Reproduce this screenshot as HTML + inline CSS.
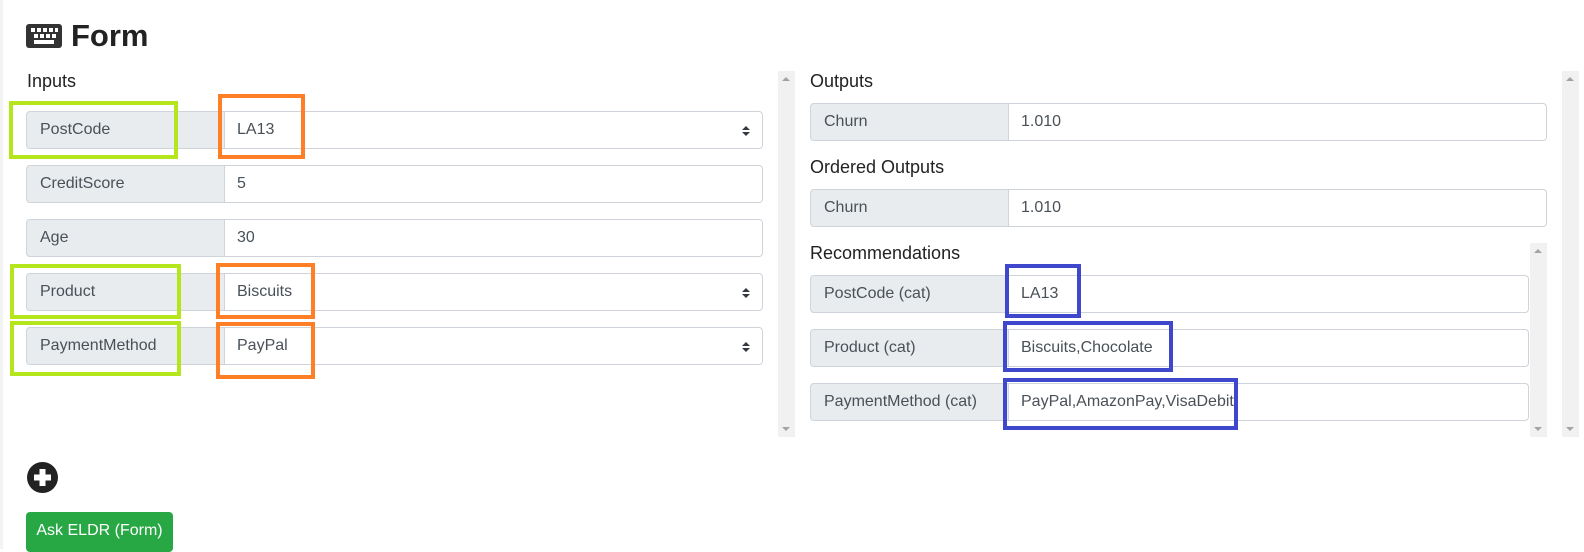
<!DOCTYPE html>
<html><head><style>
*{box-sizing:border-box;margin:0;padding:0}
body{width:1584px;height:549px;background:#fff;position:relative;overflow:hidden;font-family:"Liberation Sans",sans-serif;color:#495057}
.a{position:absolute}
.edge{left:0;top:0;width:3px;height:549px;background:#f3f3f3}
h1{position:absolute;left:71px;top:18px;font-size:31px;font-weight:bold;color:#222;line-height:36px}
.h{position:absolute;font-size:18px;color:#222;line-height:20px}
.row{position:absolute;height:38px;display:flex;font-size:16px}
.lab{background:#e9ecef;border:1px solid #ced4da;border-radius:4px 0 0 4px;padding-left:13px;display:flex;align-items:center;flex:none}
.val{flex:1;border:1px solid #ced4da;border-left:none;border-radius:0 4px 4px 0;padding-left:12px;display:flex;align-items:center;position:relative;background:#fff}
.arr{position:absolute;right:12px;top:13px;width:8px;height:12px}
.sb{position:absolute;background:#f1f1f1;width:17px}
.up,.dn{position:absolute;left:4px;width:0;height:0;border-left:4px solid transparent;border-right:4px solid transparent}
.up{top:6px;border-bottom:4px solid #a3a3a3}
.dn{bottom:6px;border-top:4px solid #a3a3a3}
.box{position:absolute;border:4px solid}
.g{border-color:#b5e61d}.o{border-color:#ff7f27}.b{border-color:#3f48cc}
.btn{position:absolute;left:26px;top:512px;width:147px;height:40px;background:#28a745;border-radius:4px;color:#fff;font-size:16px;display:flex;align-items:center;justify-content:center;padding-bottom:2px}
</style></head><body>
<div class="a edge"></div>
<svg class="a" style="left:26px;top:24px" width="36" height="24" viewBox="0 0 36 24">
<rect x="0" y="0" width="36" height="24" rx="3" fill="#333"/>
<g fill="#fff"><rect x="5" y="4" width="4" height="4"/><rect x="11" y="4" width="4" height="4"/><rect x="17" y="4" width="4" height="4"/><rect x="23" y="4" width="4" height="4"/><rect x="29" y="4" width="3" height="4"/>
<rect x="8" y="10" width="4" height="4"/><rect x="14" y="10" width="4" height="4"/><rect x="20" y="10" width="4" height="4"/><rect x="26" y="10" width="4" height="4"/>
<rect x="8" y="16" width="20" height="4"/></g></svg>
<h1>Form</h1>

<div class="h" style="left:27px;top:71px">Inputs</div>
<div class="row" style="left:26px;top:111px;width:737px"><div class="lab" style="width:199px">PostCode</div><div class="val">LA13<svg class="arr" viewBox="0 0 8 12"><path d="M0 5L4 1L8 5ZM0 7L4 11L8 7Z" fill="#343a40"/></svg></div></div>
<div class="row" style="left:26px;top:165px;width:737px"><div class="lab" style="width:199px">CreditScore</div><div class="val">5</div></div>
<div class="row" style="left:26px;top:219px;width:737px"><div class="lab" style="width:199px">Age</div><div class="val">30</div></div>
<div class="row" style="left:26px;top:273px;width:737px"><div class="lab" style="width:199px">Product</div><div class="val">Biscuits<svg class="arr" viewBox="0 0 8 12"><path d="M0 5L4 1L8 5ZM0 7L4 11L8 7Z" fill="#343a40"/></svg></div></div>
<div class="row" style="left:26px;top:327px;width:737px"><div class="lab" style="width:199px">PaymentMethod</div><div class="val">PayPal<svg class="arr" viewBox="0 0 8 12"><path d="M0 5L4 1L8 5ZM0 7L4 11L8 7Z" fill="#343a40"/></svg></div></div>
<div class="sb" style="left:778px;top:71px;height:366px"><div class="up"></div><div class="dn"></div></div>

<div class="h" style="left:810px;top:71px">Outputs</div>
<div class="row" style="left:810px;top:103px;width:737px"><div class="lab" style="width:199px">Churn</div><div class="val">1.010</div></div>
<div class="h" style="left:810px;top:157px">Ordered Outputs</div>
<div class="row" style="left:810px;top:189px;width:737px"><div class="lab" style="width:199px">Churn</div><div class="val">1.010</div></div>
<div class="h" style="left:810px;top:243px">Recommendations</div>
<div class="row" style="left:810px;top:275px;width:719px"><div class="lab" style="width:199px">PostCode (cat)</div><div class="val">LA13</div></div>
<div class="row" style="left:810px;top:329px;width:719px"><div class="lab" style="width:199px">Product (cat)</div><div class="val">Biscuits,Chocolate</div></div>
<div class="row" style="left:810px;top:383px;width:719px"><div class="lab" style="width:199px">PaymentMethod (cat)</div><div class="val">PayPal,AmazonPay,VisaDebit</div></div>
<div class="sb" style="left:1530px;top:243px;height:194px"><div class="up"></div><div class="dn"></div></div>
<div class="sb" style="left:1562px;top:71px;height:366px"><div class="up"></div><div class="dn"></div></div>

<div class="box g" style="left:9px;top:101px;width:169px;height:58px"></div>
<div class="box g" style="left:10px;top:264px;width:171px;height:55px"></div>
<div class="box g" style="left:10px;top:321px;width:171px;height:55px"></div>
<div class="box o" style="left:218px;top:94px;width:87px;height:65px"></div>
<div class="box o" style="left:216px;top:263px;width:99px;height:56px"></div>
<div class="box o" style="left:216px;top:322px;width:99px;height:57px"></div>
<div class="box b" style="left:1005px;top:264px;width:76px;height:54px"></div>
<div class="box b" style="left:1003px;top:321px;width:170px;height:51px"></div>
<div class="box b" style="left:1003px;top:378px;width:235px;height:52px"></div>

<svg class="a" style="left:27px;top:462px" width="31" height="31" viewBox="0 0 31 31"><circle cx="15.5" cy="15.5" r="15.5" fill="#222"/><rect x="12.5" y="7" width="6" height="17" fill="#fff"/><rect x="7" y="12.5" width="17" height="6" fill="#fff"/></svg>
<div class="btn">Ask ELDR (Form)</div>
</body></html>
